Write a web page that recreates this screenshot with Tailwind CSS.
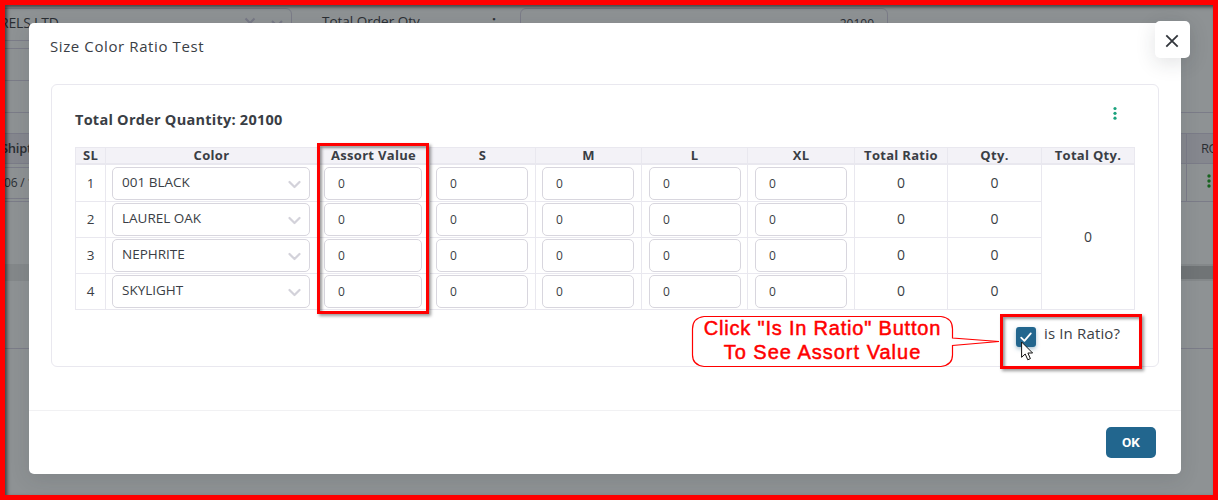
<!DOCTYPE html>
<html lang="en">
<head>
<meta charset="utf-8">
<title>Size Color Ratio Test</title>
<script src="https://cdn.jsdelivr.net/npm/@tailwindcss/browser@4"></script>
</head>
<body class="relative h-[500px] w-[1218px] overflow-hidden bg-[#8e9294] font-['Open_Sans','Noto_Sans',sans-serif] text-sm text-[#3a3e45]">

<!-- Dimmed order form behind the dialog -->
<div class="flex h-[500px] flex-col text-[#2a2e33]">
  <div class="flex h-12 shrink-0 pt-2">
    <div class="flex h-[33px] w-[292px] items-start justify-between rounded-r-md border border-[#7b7c88] pr-2 pl-1 pt-[3px] text-[14px] leading-[22px]">
      <span class="-ml-[5px] tracking-[-0.2px]">RELS LTD</span>
      <span class="flex gap-[15px] pt-[5px]">
        <svg class="size-3" viewBox="0 0 12 12" fill="none" stroke="#777985" stroke-width="2"><path d="M1.5 1.5l9 9m0-9l-9 9"/></svg>
        <svg class="size-3" viewBox="0 0 12 12" fill="none" stroke="#777985" stroke-width="2"><path d="M1 4l5 5 5-5"/></svg>
      </span>
    </div>
    <div class="ml-[30px] w-[170px] pt-[2px] text-[13.5px] leading-[22px]">Total Order Qty</div>
    <div class="w-[28px] pt-[2px] font-bold leading-[22px]">:</div>
    <div class="h-[33px] w-[368px] rounded-md border border-[#7b7c88] pt-[5px] pr-[13px] text-right text-xs leading-[20px]">20100</div>
  </div>
  <div class="h-[33px] w-[292px] shrink-0 border border-[#7b7c88]"></div>
  <div class="h-[32px] shrink-0 border-b border-[#7b7c88]"></div>
  <div class="h-[21px] shrink-0 border-b border-[#7b7c88]"></div>
  <div class="flex h-[30px] shrink-0 items-center justify-between border-b border-[#7b7c88] bg-[#85878e] pl-[1px] text-[13px] font-semibold">
    <span class="tracking-[-0.3px]">Shipt</span>
    <span class="flex h-full w-[32px] items-center border-l border-[#7b7c88] pl-[14px] font-normal tracking-[-0.4px]">RO</span>
  </div>
  <div class="flex h-[38px] shrink-0 items-center justify-between border-b border-[#7b7c88] pl-1 text-xs">
    <span class="flex h-8 w-20 items-center border-y border-[#7b7c88] tracking-[-0.2px]">06 / 1</span>
    <span class="flex h-full w-[32px] items-center border-l border-[#7b7c88] pl-[20px]">
      <svg class="-mt-[3px] h-4 w-1" viewBox="0 0 4 16" fill="#17631f"><circle cx="2" cy="3" r="1.7"/><circle cx="2" cy="8" r="1.7"/><circle cx="2" cy="13" r="1.7"/></svg>
    </span>
  </div>
  <div class="h-[62px] shrink-0"></div>
  <div class="flex h-[17px] shrink-0 justify-end bg-[#84888a] py-[2px]"><span class="w-10 bg-[#707476]"></span></div>
  <div class="h-[68px] shrink-0 border-b border-[#7b7c88]"></div>
</div>

<!-- Dialog -->
<div class="absolute top-[23px] left-[29px] flex h-[451px] w-[1152px] flex-col rounded-[5px] bg-white shadow-[0_5px_20px_rgba(34,41,47,0.12)]">
  <div class="h-[61px] shrink-0 pt-[12px] pl-[21px] text-[15px] leading-[22px] tracking-[0.6px]">Size Color Ratio Test</div>

  <div class="ml-[22px] h-[283px] w-[1108px] shrink-0 rounded-md border border-[#e9e8ef] pl-[23px]">
    <div class="flex h-[62px] justify-between pr-[41px]">
      <div class="pt-[24px] text-[14.5px] leading-[22px] font-bold tracking-[0.25px]">Total Order Quantity: 20100</div>
      <svg class="mt-[20px] h-[15px] w-1" viewBox="0 0 4 15" fill="#1ba37e"><circle cx="2" cy="3.500" r="1.6"/><circle cx="2" cy="8.300" r="1.6"/><circle cx="2" cy="13.200" r="1.6"/></svg>
    </div>

    <div id="table" class="grid w-[1060px] grid-cols-[30px_212px_112px_106px_106px_106px_107px_93px_94px_93px] grid-rows-[17px_37px_36px_36px_36px] border-t border-l border-[#e9e8ef]"></div>

    <div class="mt-[17px] ml-[941px] flex gap-2">
      <span class="flex size-5 items-center justify-center rounded-[3px] bg-[#22668e] shadow-[0_2px_4px_rgba(34,102,142,0.4)]">
        <svg class="size-[14px]" viewBox="0 0 14 14" fill="none" stroke="#fff" stroke-width="1.8" stroke-linecap="round" stroke-linejoin="round"><path d="M2.2 7.6l3.2 3.2 6.4-7.4"/></svg>
      </span>
      <span class="-mt-[4px] text-[15px] leading-5 tracking-[0.15px]">is In Ratio?</span>
    </div>
  </div>

  <div class="mt-[43px] flex grow justify-end border-t border-[#f1f1f3] pt-4 pr-[25px]">
    <button class="h-[31px] w-[50px] rounded-[5px] bg-[#22668e] font-['Roboto',sans-serif] text-[13.5px] font-bold text-white">OK</button>
  </div>

  <button class="absolute -top-[2px] right-[-9px] flex h-[37px] w-[35px] items-center justify-center rounded-[5px] bg-white shadow-[0_5px_20px_rgba(34,41,47,0.13)]">
    <svg class="mt-[2px] mr-[1px] size-[14px]" viewBox="0 0 14 14" fill="none" stroke="#32363c" stroke-width="1.8"><path d="M1.3 1.3l11.4 11.4m0-11.4L1.3 12.7"/></svg>
  </button>
</div>

<!-- Annotations -->
<div class="absolute top-[143px] left-[317px] h-[171px] w-[112px] border-3 border-[#f00] shadow-[2px_2px_3px_rgba(0,0,0,0.4),inset_2px_2px_3px_rgba(0,0,0,0.4)]"></div>
<div class="absolute top-[314px] left-[1000px] h-[55px] w-[142px] border-3 border-[#f00] shadow-[2px_2px_3px_rgba(0,0,0,0.4),inset_2px_2px_3px_rgba(0,0,0,0.4)]"></div>
<svg class="absolute top-[314px] left-[690px] h-[56px] w-[312px]" viewBox="0 0 312 56" fill="#fff" stroke="#f00" stroke-width="1.2"><path d="M14 2.500H251Q262.500 4 262.500 15V24L309 27.500 262.500 31.500V41Q262.500 51 251 52.500H14Q2.500 51 2.500 41V15Q2.500 4 14 2.500Z"/></svg>
<div class="absolute top-[316px] left-[692px] w-[261px] text-center font-['Liberation_Sans',Arial,sans-serif] text-[20px] leading-6 tracking-[0.8px] text-[#f00] [-webkit-text-stroke:0.5px_#f00]">
  <div class="whitespace-nowrap">Click "Is In Ratio" Button</div>
  <div class="tracking-[1px]">To See Assort Value</div>
</div>
<svg class="absolute top-[341px] left-[1021px] h-[20px] w-[13px]" viewBox="0 0 13 20" fill="#fff" stroke="#111" stroke-width="1"><path d="M.6 1V16.300L4.200 13 6.800 18.800 9.400 17.600 6.900 12H11.600Z"/></svg>
<div class="absolute inset-0 border-5 border-[#f00] shadow-[inset_2px_2px_4px_rgba(0,0,0,0.35)]"></div>
<div class="absolute inset-[5px] shadow-[inset_2px_2px_3px_rgba(0,0,0,0.3)] [clip-path:polygon(0_0,100%_0,100%_16px,24px_16px,24px_100%,0_100%)]"></div>

<script>
  const headers = ['SL', 'Color', 'Assort Value', 'S', 'M', 'L', 'XL', 'Total Ratio', 'Qty.', 'Total Qty.'];
  const colors = ['001 BLACK', 'LAUREL OAK', 'NEPHRITE', 'SKYLIGHT'];
  const cell = 'border-r border-b border-[#e9e8ef]';
  const input = 'h-[33px] rounded-[5px] border border-[#d8d6de] bg-white';
  let html = headers.map(h => `<div class="border-r border-b-2 border-[#e9e8ef] bg-[#f3f2f7] text-center text-[13px] leading-[15px] font-bold tracking-[0.3px] whitespace-nowrap">${h}</div>`).join('');
  colors.forEach((name, i) => {
    const top = i === 0 ? 'pt-[2px]' : 'pt-px';
    html += `<div class="${cell} ${top} text-center text-[13.5px] leading-[32px]">${i + 1}</div>`;
    html += `<div class="${cell} ${top} pl-[6px]"><div class="${input} flex w-[198px] justify-between pr-2 pl-[9px] text-[13.5px] leading-[29px]">${name}<svg class="mt-[10px] size-[13px]" viewBox="0 0 13 13" fill="none" stroke="#d3d2da" stroke-width="2.2" stroke-linecap="round" stroke-linejoin="round"><path d="M1.500 4l5 5 5-5"/></svg></div></div>`;
    html += `<div class="${cell} ${top} pl-[6px]"><div class="${input} w-[98px] pl-[13px] text-[12px] leading-[31px]">0</div></div>`;
    ['pl-[6px]', 'pl-[6px]', 'pl-[7px]', 'pl-[7px]'].forEach(pad => {
      html += `<div class="${cell} ${top} ${pad}"><div class="${input} w-[92px] pl-[13px] text-[12px] leading-[31px]">0</div></div>`;
    });
    html += `<div class="${cell} ${top} text-center text-[14px] leading-[31px]">0</div>`.repeat(2);
    if (i === 0) html += `<div class="${cell} row-span-4 flex items-center justify-center text-[14px]">0</div>`;
  });
  document.getElementById('table').innerHTML = html;
</script>
</body>
</html>
